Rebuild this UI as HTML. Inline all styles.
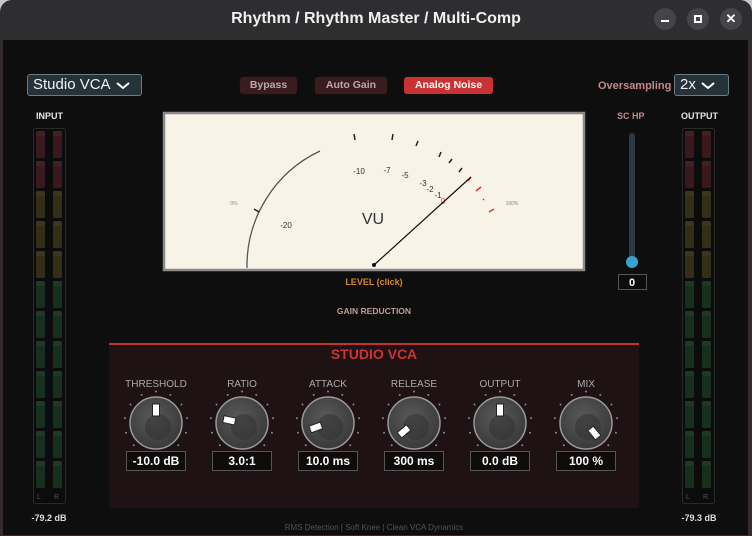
<!DOCTYPE html>
<html><head><meta charset="utf-8"><style>
*{margin:0;padding:0;box-sizing:border-box}
body{width:752px;height:536px;background:#c9c9c9;font-family:"Liberation Sans",sans-serif;position:relative;overflow:hidden}
.win{position:absolute;left:0;top:0;width:752px;height:536px;background:#2e2e30;border-radius:12px 12px 0 0}
.title{position:absolute;top:10px;left:0;width:752px;text-align:center;color:#f0f0f0;font-weight:bold;font-size:16px}
.wb{position:absolute;top:8px;width:22px;height:22px;border-radius:50%;background:#454547}
.main{position:absolute;left:2px;top:39px;width:747px;height:497px;background:#0f0e0e;border:1px solid #3d2626}
.a{position:absolute}
.dd{position:absolute;background:#25323a;border:1px solid #6b7b83;border-radius:3px;color:#f2f2f2;font-size:15px;padding-left:5px;line-height:19px}
.btn{position:absolute;top:77px;height:17px;border-radius:3px;font-size:10.5px;font-weight:bold;text-align:center;line-height:17px;background:#3a1c1e;color:#b9aaaa;box-shadow:0 0 2px #2a1010}
.lab{position:absolute;font-size:9px;font-weight:bold;color:#e6e6e6}
.vb{position:absolute;top:451px;width:60px;height:20px;border:1px solid #555;background:#0f0b0b;color:#fff;font-weight:bold;font-size:12px;text-align:center;line-height:18px}
.kl{position:absolute;top:379px;width:90px;text-align:center;color:#aaa;font-size:10px}
</style></head><body>
<div class="win">
<div class="title">Rhythm / Rhythm Master / Multi-Comp</div>
<div class="wb" style="left:654px"><div class="a" style="left:7px;top:12px;width:8px;height:2px;background:#fff"></div></div>
<div class="wb" style="left:687px"><div class="a" style="left:7px;top:7px;width:8px;height:8px;border:2px solid #fff"></div></div>
<div class="wb" style="left:720px;color:#fff;font-weight:bold;font-size:13px;text-align:center;line-height:22px">✕</div>
<div class="main"></div>

<div class="dd" style="left:27px;top:74px;width:115px;height:22px">Studio VCA</div>
<svg class="a" style="left:115px;top:81px" width="16" height="10"><path d="M2 2 L8 7 L14 2" stroke="#fff" stroke-width="2" fill="none"/></svg>
<div class="btn" style="left:240px;width:57px">Bypass</div>
<div class="btn" style="left:315px;width:72px">Auto Gain</div>
<div class="btn" style="left:404px;width:89px;background:#c83234;color:#fff">Analog Noise</div>
<div class="a" style="left:598px;top:80px;font-size:11px;font-weight:bold;color:#c08a88">Oversampling</div>
<div class="dd" style="left:674px;top:74px;width:55px;height:22px">2x</div>
<svg class="a" style="left:700px;top:81px" width="16" height="10"><path d="M2 2 L8 7 L14 2" stroke="#fff" stroke-width="2" fill="none"/></svg>

<div class="lab" style="left:36px;top:111px">INPUT</div>
<div class="lab" style="left:681px;top:111px">OUTPUT</div>
<div class="lab" style="left:617px;top:111px;color:#c08a88">SC HP</div>

<svg class="a" style="left:0;top:0" width="752" height="536">
<defs>
<radialGradient id="kg" cx="0.45" cy="0.4" r="0.6"><stop offset="0" stop-color="#5a5a5a"/><stop offset="1" stop-color="#3a3a3a"/></radialGradient>
</defs>
<rect x="33.5" y="128.5" width="32" height="375" rx="2" fill="#0c0c0c" stroke="#2a2a2a"/>
<rect x="682.5" y="128.5" width="32" height="375" rx="2" fill="#0c0c0c" stroke="#2a2a2a"/>
<g id="segs"></g>
<text x="37" y="499" font-size="7" fill="#555">L</text><text x="54" y="499" font-size="7" fill="#555">R</text>
<text x="686" y="499" font-size="7" fill="#555">L</text><text x="703" y="499" font-size="7" fill="#555">R</text>
<text x="49" y="521" font-size="9" font-weight="bold" fill="#ddd" text-anchor="middle">-79.2 dB</text>
<text x="699" y="521" font-size="9" font-weight="bold" fill="#ddd" text-anchor="middle">-79.3 dB</text>

<rect x="629" y="133" width="6" height="130" rx="3" fill="#2b3a44"/>
<circle cx="632" cy="262" r="6" fill="#38a3d2"/>
<rect x="618.5" y="274.5" width="28" height="15" fill="#0d0d0d" stroke="#555"/>
<text x="632" y="286" font-size="11" font-weight="bold" fill="#fff" text-anchor="middle">0</text>

<rect x="164" y="113" width="420" height="157" fill="#f7f3e6" stroke="#8a8a8a" stroke-width="2.5"/>
<path d="M247 268 A127 127 0 0 1 320 151" stroke="#555" stroke-width="1.3" fill="none"/>
<g stroke="#222" stroke-width="1.5">
<line x1="254" y1="209" x2="259" y2="212"/>
<line x1="354" y1="134" x2="355" y2="140"/>
<line x1="393" y1="134" x2="392" y2="140"/>
<line x1="418" y1="141" x2="416" y2="146"/>
<line x1="441" y1="152" x2="439" y2="157"/>
<line x1="452" y1="159" x2="449" y2="163"/>
<line x1="462" y1="168" x2="459" y2="172"/>
</g>
<g stroke="#e03030" stroke-width="1.5">
<line x1="471" y1="177" x2="468" y2="181"/>
<line x1="481" y1="187" x2="476" y2="191"/>
<line x1="484" y1="199" x2="483" y2="200"/>
<line x1="494" y1="209" x2="489" y2="212"/>
</g>
<g font-size="8" fill="#333" text-anchor="middle">
<text x="359" y="174">-10</text><text x="387" y="173">-7</text><text x="405" y="178">-5</text>
<text x="423" y="186">-3</text><text x="430" y="192">-2</text><text x="438" y="198">-1</text>
<text x="443" y="204" fill="#e03030">0</text><text x="286" y="228">-20</text>
</g>
<text x="234" y="205" font-size="5" fill="#888" text-anchor="middle">0%</text>
<text x="512" y="205" font-size="5" fill="#888" text-anchor="middle">100%</text>
<text x="373" y="224" font-size="16" fill="#333" text-anchor="middle">VU</text>
<line x1="374" y1="265" x2="471" y2="177" stroke="#111" stroke-width="1.2"/>
<circle cx="374" cy="265" r="2" fill="#111"/>
<text x="374" y="285" font-size="9" font-weight="bold" fill="#d8862a" text-anchor="middle">LEVEL (click)</text>
<text x="374" y="314" font-size="8.5" font-weight="bold" fill="#c09a98" text-anchor="middle">GAIN REDUCTION</text>

<rect x="109" y="343" width="530" height="165" fill="#1f1214"/>
<rect x="109" y="343" width="530" height="2" fill="#c8302e"/>
<text x="374" y="359" font-size="14" font-weight="bold" fill="#d03232" text-anchor="middle">STUDIO VCA</text>
<g id="knobs"></g>
<text x="374" y="530" font-size="8" fill="#5a5050" text-anchor="middle">RMS Detection | Soft Knee | Clean VCA Dynamics</text>
</svg>

<div class="kl" style="left:111px">THRESHOLD</div>
<div class="kl" style="left:197px">RATIO</div>
<div class="kl" style="left:283px">ATTACK</div>
<div class="kl" style="left:369px">RELEASE</div>
<div class="kl" style="left:455px">OUTPUT</div>
<div class="kl" style="left:541px">MIX</div>
<div class="vb" style="left:126px">-10.0 dB</div>
<div class="vb" style="left:212px">3.0:1</div>
<div class="vb" style="left:298px">10.0 ms</div>
<div class="vb" style="left:384px">300 ms</div>
<div class="vb" style="left:470px">0.0 dB</div>
<div class="vb" style="left:556px">100 %</div>
</div>
<script>
var ns="http://www.w3.org/2000/svg";
function el(t,a,p){var e=document.createElementNS(ns,t);for(var k in a)e.setAttribute(k,a[k]);p.appendChild(e);return e;}
var sg=document.getElementById("segs");
var cols=["#3a191c","#3a191c","#332e18","#332e18","#332e18","#17301e","#17301e","#17301e","#17301e","#17301e","#17301e","#17301e"];
[[36,53],[685,702]].forEach(function(xs){xs.forEach(function(x){for(var i=0;i<12;i++){el("rect",{x:x,y:131+i*30,width:9,height:27,rx:1.5,fill:cols[i]},sg);el("rect",{x:x,y:131+i*30,width:9,height:5,rx:1.5,fill:"#fff","fill-opacity":"0.04"},sg);}});});
var kg=document.getElementById("knobs");
var ks=[[156,0],[242,-78],[328,-110],[414,-130],[500,0],[586,140]];
ks.forEach(function(k){var cx=k[0],cy=423;
for(var i=0;i<11;i++){var a=(-135+i*27)*Math.PI/180;el("circle",{cx:cx+31.5*Math.sin(a),cy:cy-31.5*Math.cos(a),r:1,fill:"#888"},kg);}
el("circle",{cx:cx,cy:cy,r:26,fill:"url(#kg)",stroke:"#9a9a9a","stroke-width":"1.5"},kg);
el("circle",{cx:cx+2,cy:cy+4,r:13,fill:"#333","fill-opacity":"0.6"},kg);
var g=el("g",{transform:"rotate("+k[1]+" "+cx+" "+cy+")"},kg);
el("rect",{x:cx-3.5,y:cy-19,width:7,height:12,fill:"#fff",stroke:"#222","stroke-width":"1"},g);
});
</script>
</body></html>
